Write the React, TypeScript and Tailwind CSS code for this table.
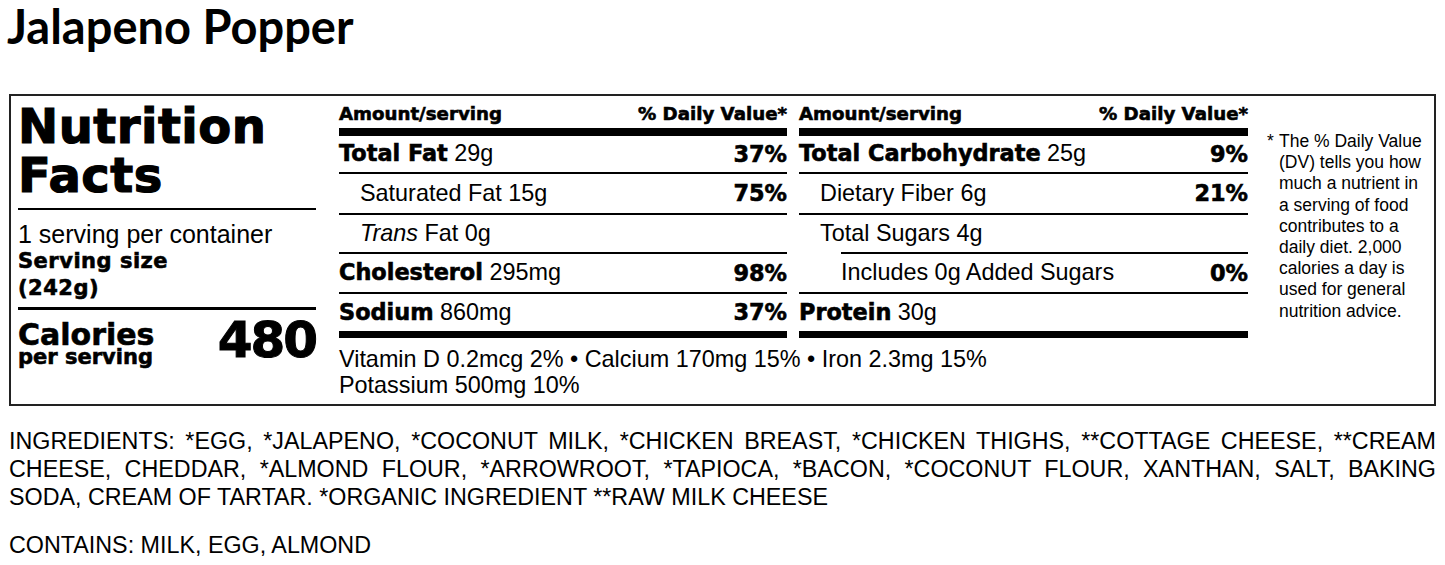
const heavy = "font-['DejaVu_Sans',sans-serif] font-bold [-webkit-text-stroke:0.6px_black]";
const plain = "font-['Liberation_Sans',Arial,sans-serif]";

type RowProps = {
  name: string;
  amount?: string;
  dv?: string;
  bold?: boolean;
  indent?: string;
  h: string;
  italicLead?: string;
};

function Row({ name, amount, dv, bold, indent, h, italicLead }: RowProps) {
  return (
    <div className={`flex items-center justify-between ${h} ${indent ?? ""}`}>
      <div className="leading-none whitespace-nowrap">
        {italicLead && <span className={`${plain} italic text-[23.4px]`}>{italicLead} </span>}
        <span className={bold ? `${heavy} text-[22.4px]` : `${plain} text-[23.4px]`}>{name}</span>
        {amount && <span className={`${plain} text-[23.4px]`}> {amount}</span>}
      </div>
      {dv && <div className={`${heavy} text-[22.4px] leading-none`}>{dv}</div>}
    </div>
  );
}

function Line({ indent }: { indent?: string }) {
  return <div className={`h-[2px] bg-black ${indent ?? ""}`} />;
}

function Header() {
  return (
    <>
      <div className={`flex justify-between ${heavy} text-[18.2px] leading-[20px] pt-[8px]`}>
        <span>Amount/serving</span>
        <span>% Daily Value*</span>
      </div>
      <div className="h-[8px] bg-black mt-[4px]" />
    </>
  );
}

export default function App() {
  return (
    <div className="bg-white text-black min-h-[565px]">
      <h1 className="font-['Lato',sans-serif] font-bold text-[47px] leading-[52px] pl-[7px]">
        Jalapeno Popper
      </h1>

      <div className="mt-[42px] mx-[9px] border-2 border-[#222] flex h-[312px]">
        {/* left */}
        <div className="w-[298px] ml-[7px] pt-[6px] shrink-0">
          <div className={`${heavy} [-webkit-text-stroke:1.2px_black] text-[48px] leading-[49px] tracking-[0.5px]`}>
            Nutrition
            <br />
            Facts
          </div>
          <div className="h-[2px] bg-black mt-[8px]" />
          <div className={`${plain} text-[25px] leading-[26px] mt-[11px]`}>1 serving per container</div>
          <div className={`${heavy} text-[21px] leading-[27px] tracking-[0.5px] mt-[1px]`}>
            Serving size
            <br />
            (242g)
          </div>
          <div className="h-[3px] bg-black mt-[5px]" />
          <div className="flex justify-between items-start mt-[7px]">
            <div className={`${heavy} pt-[5px]`}>
              <div className="text-[30px] leading-[26px]">Calories</div>
              <div className="text-[21px] leading-[18px]">per serving</div>
            </div>
            <div className={`${heavy} [-webkit-text-stroke:1px_black] text-[50px] leading-[46px] tracking-[-2px]`}>480</div>
          </div>
        </div>

        {/* middle + right */}
        <div className="ml-[23px] w-[909px] shrink-0">
          <div className="grid grid-cols-[448px_449px] gap-x-[12px]">
            <div>
              <Header />
              <Row h="h-[36px]" bold name="Total Fat" amount="29g" dv="37%" />
              <Line />
              <Row h="h-[39px]" indent="pl-[21px]" name="Saturated Fat 15g" dv="75%" />
              <Line />
              <Row h="h-[37px]" indent="pl-[21px]" italicLead="Trans" name="Fat 0g" />
              <Line />
              <Row h="h-[38px]" bold name="Cholesterol" amount="295mg" dv="98%" />
              <Line />
              <Row h="h-[37px]" bold name="Sodium" amount="860mg" dv="37%" />
              <div className="h-[7px] bg-black" />
            </div>
            <div>
              <Header />
              <Row h="h-[36px]" bold name="Total Carbohydrate" amount="25g" dv="9%" />
              <Line />
              <Row h="h-[39px]" indent="pl-[21px]" name="Dietary Fiber 6g" dv="21%" />
              <Line />
              <Row h="h-[37px]" indent="pl-[21px]" name="Total Sugars 4g" />
              <Line indent="ml-[42px]" />
              <Row h="h-[38px]" indent="pl-[42px]" name="Includes 0g Added Sugars" dv="0%" />
              <Line />
              <Row h="h-[37px]" bold name="Protein" amount="30g" />
              <div className="h-[7px] bg-black" />
            </div>
          </div>
          <div className={`${plain} text-[23.4px] leading-[26px] mt-[8px]`}>
            Vitamin D 0.2mcg 2% • Calcium 170mg 15% • Iron 2.3mg 15%
            <br />
            Potassium 500mg 10%
          </div>
        </div>

        {/* footnote */}
        <div className={`${plain} ml-[19px] pt-[35px] pr-[2px] flex text-[17.5px] leading-[21.2px]`}>
          <span className="w-[12px] shrink-0">*</span>
          <span>
            The % Daily Value (DV) tells you how much a nutrient in a serving of food contributes to a daily diet. 2,000
            calories a day is used for general nutrition advice.
          </span>
        </div>
      </div>

      <div className={`mx-[9px] ${plain} text-[23.3px] leading-[28px]`}>
        <p className="mt-[21px]">
          <span className="block text-justify [text-align-last:justify]">
            INGREDIENTS: *EGG, *JALAPENO, *COCONUT MILK, *CHICKEN BREAST, *CHICKEN THIGHS, **COTTAGE CHEESE, **CREAM
          </span>
          <span className="block text-justify [text-align-last:justify]">
            CHEESE, CHEDDAR, *ALMOND FLOUR, *ARROWROOT, *TAPIOCA, *BACON, *COCONUT FLOUR, XANTHAN, SALT, BAKING
          </span>
          <span className="block">SODA, CREAM OF TARTAR. *ORGANIC INGREDIENT **RAW MILK CHEESE</span>
        </p>
        <p className="mt-[20px]">CONTAINS: MILK, EGG, ALMOND</p>
      </div>
    </div>
  );
}
